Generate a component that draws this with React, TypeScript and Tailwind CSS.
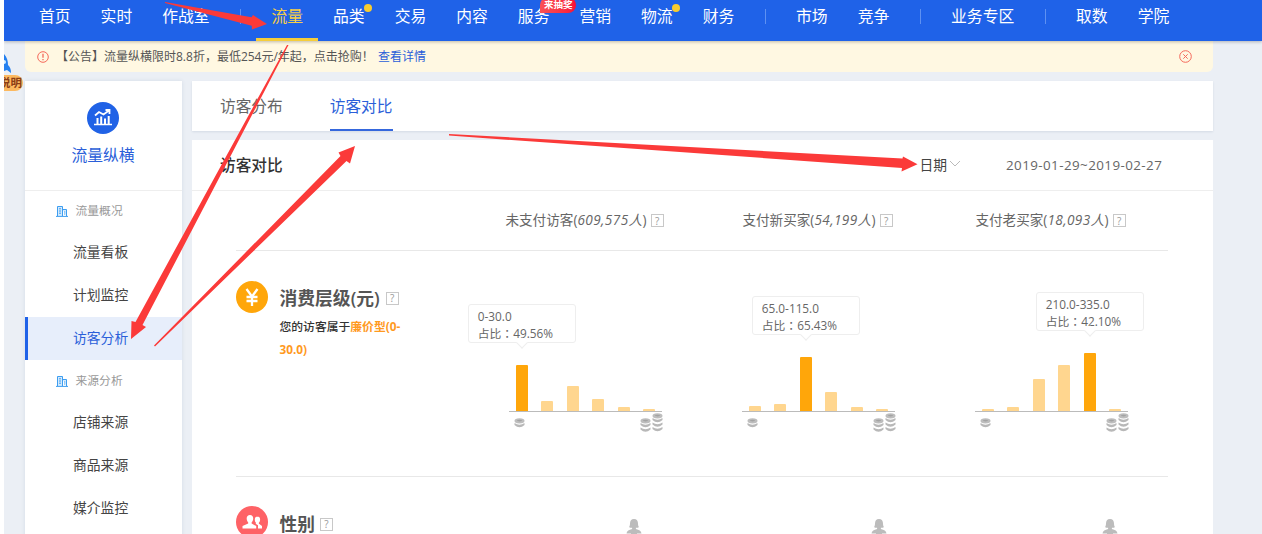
import clsx from 'clsx'

const navGroups = [
  [{ name: '首页' }, { name: '实时' }, { name: '作战室' }],
  [
    { name: '流量', active: true },
    { name: '品类', dot: true },
    { name: '交易' },
    { name: '内容' },
    { name: '服务', badge: '来抽奖' },
    { name: '营销' },
    { name: '物流', dot: true },
    { name: '财务' },
  ],
  [{ name: '市场' }, { name: '竞争' }],
  [{ name: '业务专区' }],
  [{ name: '取数' }, { name: '学院' }],
] as { name: string; active?: boolean; dot?: boolean; badge?: string }[][]

const menu = [
  { title: '流量概况', items: ['流量看板', '计划监控', '访客分析'] },
  { title: '来源分析', items: ['店铺来源', '商品来源', '媒介监控'] },
]

const columns = [
  { name: '未支付访客', count: '609,575', range: '0-30.0', rate: '49.56%', top: 0, bars: [46, 10, 25, 12, 4, 2] },
  { name: '支付新买家', count: '54,199', range: '65.0-115.0', rate: '65.43%', top: 2, bars: [5, 7, 54, 19, 4, 2] },
  { name: '支付老买家', count: '18,093', range: '210.0-335.0', rate: '42.10%', top: 4, bars: [2, 4, 32, 46, 58, 2] },
]

function Help() {
  return (
    <span className="inline-flex h-[13px] w-[13px] shrink-0 items-center justify-center border border-[#c8c8c8] text-[10px] leading-none font-normal text-[#999]">
      ?
    </span>
  )
}

function Building() {
  return (
    <svg className="h-3 w-3" viewBox="0 0 12 12" fill="#d3eafd" stroke="#3d9df0" strokeWidth="1">
      <path d="M1.5 11V1.5h5V11M6.5 4.5h4V11M0 11.4h12" />
      <path d="M3 3.8h2M3 6h2M3 8.2h2M8 7h1.2M8 9h1.2" />
    </svg>
  )
}

function Coins({ n }: { n: number }) {
  return (
    <svg width="11" height={5 + n * 4.5} viewBox={`0 0 11 ${5 + n * 4.5}`}>
      <ellipse cx="5.5" cy="2.8" rx="5" ry="2.6" fill="#bdbdbd" />
      <ellipse cx="5.5" cy="2.6" rx="2.6" ry="0.8" fill="#a3a3a3" />
      {Array.from({ length: n }, (_, i) => (
        <path key={i} d={`M0.5 ${5 + i * 4.5}q5 3.4 10 0v2q-5 4.4-10 0z`} fill="#b8b8b8" />
      ))}
    </svg>
  )
}

function Chart({ col }: { col: (typeof columns)[number] }) {
  return (
    <div className="flex flex-col items-center pt-[90px]">
      {/* bars sit on the axis */}
      <div className="flex h-[71px] w-[153px] items-end border-b border-[#bbb]">
        {col.bars.map((h, i) => (
          <div key={i} className="relative flex w-[25.5px] justify-center">
            <div
              className={clsx('w-3 rounded-t-[1px]', i === col.top ? 'bg-[#ffa60a]' : 'bg-[#ffd68f]')}
              style={{ height: h }}
            />
            {i === col.top && (
              <div className="absolute bottom-full left-1/2 mb-[22px] h-[39px] w-[108px] -translate-x-1/2 rounded-[3px] border border-[#eee] bg-white pt-[3px] pl-[9px] text-[11.8px] leading-[16.5px] whitespace-nowrap text-[#666]">
                <p>{col.range}</p>
                <p>
                  占比<span className="font-['Noto_Sans_CJK_TC',sans-serif]">：</span>
                  {col.rate}
                </p>
                <span className="absolute -bottom-[5px] left-[49px] h-2 w-2 rotate-45 border-r border-b border-[#eee] bg-white" />
              </div>
            )}
          </div>
        ))}
      </div>
      <div className="mt-px flex w-[155px] items-start justify-between pl-1.5">
        <div className="pt-[5px]">
          <Coins n={1} />
        </div>
        <div className="flex items-end gap-px">
          <Coins n={2} />
          <Coins n={3} />
        </div>
      </div>
    </div>
  )
}

function Person() {
  return (
    <svg width="16" height="18" viewBox="0 0 16 18" fill="#bcbcbc">
      <path d="M8 0C5.2 0 4 2 4 4.4c0 1.6-.3 2.7-1 3.6.9.8 2 .9 3.1.8v1.3C3 11 .8 11.8.5 14.5h15c-.3-2.7-2.5-3.5-5.6-4.4V8.8c1.1.1 2.2 0 3.1-.8-.7-.9-1-2-1-3.6C12 2 10.8 0 8 0z" />
      <path d="M5 14h6v4H5z" />
    </svg>
  )
}

function Arrows() {
  return (
    <svg className="pointer-events-none absolute inset-0 z-20" width="1262" height="534" fill="#fb3a39">
      <path d="M165 2L251.5 17.3L253 15L267 24L252 29.5L251.7 25.8L165 3z" />
      <path d="M287 45L288.5 45L142.5 325L146 327L131 339L131.5 321L135.5 322z" />
      <path d="M154 345.5L340.5 156L338.5 152.5L355 146L350 163.5L346.5 161L155 346.5z" />
      <path d="M449 134L902.5 158.5L903 156.5L917.5 164.3L901.5 171.5L902 168L449 135.5z" />
    </svg>
  )
}

export default function App() {
  return (
    <div className="relative h-[534px] w-[1262px] overflow-hidden border-l-4 border-white bg-[#ebeff5] font-['Open_Sans','Noto_Sans_CJK_SC',sans-serif] text-[#333]">
      <nav className="relative z-10 flex h-[41px] bg-[#1f62e8] pl-5 text-[15.8px] text-white shadow-[0_1px_3px_rgba(0,0,0,0.25)]">
        {navGroups.map((group, g) => (
          <div key={g} className="flex">
            {g > 0 && <span className="mx-[15.4px] mt-[9px] h-[15px] w-px bg-[#5e91f2]" />}
            {group.map((item) => (
              <a
                key={item.name}
                className={clsx(
                  'relative h-[41px] border-b-3 px-[15px] leading-[33px] whitespace-nowrap',
                  item.active ? 'border-[#f5cd3a] text-[#f7cf45]' : 'border-transparent',
                )}
              >
                {item.name}
                {item.dot && <i className="absolute top-1 right-2 h-2 w-2 rounded-full bg-[#f8cc30]" />}
                {item.badge && (
                  <i className="absolute -top-[3px] -right-[12px] h-[16px] rounded-full rounded-bl-none bg-linear-to-r from-[#fa5055] to-[#f80a38] px-1 pt-[2px] text-[9.5px] leading-[12px] font-bold not-italic">
                    {item.badge}
                  </i>
                )}
              </a>
            ))}
          </div>
        ))}
      </nav>

      <div className="ml-[21px] flex h-[31px] w-[1188px] items-center rounded-b-md bg-[#fff8e2] pr-[21px] pl-3 text-[12px] text-[#555]">
        <svg className="h-3 w-3" viewBox="0 0 12 12" fill="none" stroke="#f5695b">
          <circle cx="6" cy="6" r="5.3" />
          <path d="M6 2.8v4M6 8v1.2" strokeWidth="1.3" />
        </svg>
        <span className="ml-[7px]">【公告】流量纵横限时8.8折，最低254元/年起，点击抢购！</span>
        <a className="ml-1 text-[#2b5fd9]">查看详情</a>
        <svg className="ml-auto h-[13px] w-[13px]" viewBox="0 0 13 13" fill="none" stroke="#f5695b">
          <circle cx="6.5" cy="6.5" r="5.8" />
          <path d="M4.3 4.3l4.4 4.4M8.7 4.3l-4.4 4.4" />
        </svg>
      </div>

      {/* floating helper */}
      <div className="absolute top-[54px] left-0 z-10 w-[19px] overflow-hidden">
        <svg width="8" height="21" viewBox="0 0 8 21">
          <path d="M0 0c3 3 4 7 4 11 2 2 3 4 3 8L3 16l-3 1z" fill="#2480f0" />
          <circle cx="0" cy="8" r="2" fill="#d9efff" />
        </svg>
        <div className="flex h-4 w-[19px] justify-end rounded-r-full bg-[#fcb960] pr-px text-[11.5px] leading-4 font-bold whitespace-nowrap text-[#8b3d16]">
          说明
        </div>
      </div>

      <div className="mt-[9px] ml-[21px] flex gap-2.5">
        <aside className="h-[460px] w-[157px] bg-white shadow-[0_0_4px_rgba(60,80,120,0.12)]">
          <div className="flex h-[110px] flex-col items-center border-b border-[#eee] pt-[21px] pr-px">
            <svg width="32" height="32" viewBox="0 0 32 32">
              <circle cx="16" cy="16" r="16" fill="#2062e6" />
              <g fill="none" stroke="#fff" strokeWidth="2">
                <path d="M8 13.5l4-3.5 4.5 2.5 5.5-4M18.5 8h4v4" strokeWidth="1.8" />
                <path d="M10.5 16v6M14.2 14.5V22M18 16.5V22M21.7 14V22" />
                <path d="M7 22.5h18" strokeWidth="1.5" />
              </g>
            </svg>
            <p className="mt-[9px] text-[15.8px] leading-6 text-[#2b5fd9]">流量纵横</p>
          </div>
          <div className="-mt-px">
            {menu.map((m) => (
              <div key={m.title} className="text-[13.8px]">
                <div className="flex h-[41px] items-center gap-2 pl-[30.5px] text-[11.8px] text-[#999]">
                  <Building />
                  {m.title}
                </div>
                {m.items.map((item) => (
                  <div
                    key={item}
                    className={clsx(
                      'flex h-[43px] items-center border-l-3 pl-[45px]',
                      item === '访客分析' ? 'border-[#1f62e8] bg-[#e7eefb] text-[#2b5fd9]' : 'border-transparent text-[#444]',
                    )}
                  >
                    {item}
                  </div>
                ))}
              </div>
            ))}
          </div>
        </aside>

        <main className="w-[1021px]">
          <div className="flex h-[50px] gap-[47px] bg-white pl-7 text-[15.7px] leading-[51px] text-[#666] shadow-[0_1px_2px_rgba(60,80,120,0.12)]">
            <a>访客分布</a>
            <a className="border-b-2 border-[#3567dd] text-[#2b5fd9]">访客对比</a>
          </div>

          <section className="mt-[9px] h-[400px] bg-white">
            <header className="flex h-[51px] items-center border-b border-[#eee] pr-[51px] pl-7 text-[13.8px]">
              <h2 className="pt-px text-[15.7px] font-medium">访客对比</h2>
              <span className="ml-auto text-[#444]">日期</span>
              <svg className="mb-1 ml-0.5 h-2.5 w-3" viewBox="0 0 12 10" fill="none" stroke="#bbb">
                <path d="M1 3l5 5 5-5" />
              </svg>
              <span className="ml-[45px] w-[156px] text-[13.4px] tracking-[0.42px] whitespace-nowrap text-[#666]">
                2019-01-29~2019-02-27
              </span>
            </header>

            <div className="mr-[45px] ml-11">
              <div className="grid h-[60px] grid-cols-4 border-b border-[#e8e8e8] text-[13.6px] text-[#666]">
                <span />
                {columns.map((c) => (
                  <div key={c.name} className="-ml-0.5 flex items-center justify-center gap-1 whitespace-nowrap">
                    <span>
                      {c.name}(<i className="tracking-[0.4px]">{c.count}人</i>)
                    </span>
                    <Help />
                  </div>
                ))}
              </div>

              <div className="grid h-[226px] grid-cols-4 border-b border-[#e8e8e8]">
                <div className="flex gap-[11.5px] pt-[30px]">
                  <svg className="h-8 w-8 shrink-0" viewBox="0 0 32 32">
                    <circle cx="16" cy="16" r="16" fill="#ffa60a" />
                    <path d="M10.5 8L16 15.5 21.5 8M16 15.5V25M10.5 16h11M10.5 20h11" fill="none" stroke="#fff" strokeWidth="2.3" />
                  </svg>
                  <div className="w-[128px]">
                    <h3 className="flex items-center gap-1.5 pt-[3px] text-[17.8px] leading-7 font-semibold whitespace-nowrap text-[#555]">
                      消费层级(元) <Help />
                    </h3>
                    <p className="mt-[3px] text-[11.8px] leading-[23px] font-medium">
                      您的访客属于<b className="text-[#ff9a1f]">廉价型(0-<br />30.0)</b>
                    </p>
                  </div>
                </div>
                {columns.map((c) => (
                  <Chart key={c.name} col={c} />
                ))}
              </div>

              <div className="grid grid-cols-4">
                <div className="flex gap-[11.5px] pt-[29px]">
                  <svg className="h-8 w-8 shrink-0" viewBox="0 0 32 32">
                    <circle cx="16" cy="16" r="16" fill="#fe6266" />
                    <path d="M14 9c-2.2 0-3.5 1.6-3.3 3.8.1 1.6.7 2.8 1.5 3.6v1.2L6.5 20v2.5h13.7V20l-4.6-2.4v-1.2c.9-.8 1.5-2 1.6-3.6.2-2.2-1-3.8-3.2-3.8zM21.5 10.5c-1.8 0-2.8 1.4-2.7 3.2.1 1.5.5 2.5 1.3 3.2l-.5.8 2.4 1.6v3.2h4V20l-3-2.3-.3-.8c.8-.7 1.3-1.7 1.4-3.2.1-1.8-.9-3.2-2.6-3.2z" fill="#fff" />
                  </svg>
                  <h3 className="flex h-7 items-center gap-[5px] pt-2 text-[17.7px] leading-[18px] font-semibold text-[#555]">
                    性别 <Help />
                  </h3>
                </div>
                <div className="pt-[42px] pl-[157px]"><Person /></div>
                <div className="pt-[42px] pl-[169px]"><Person /></div>
                <div className="pt-[42px] pl-[167px]"><Person /></div>
              </div>
            </div>
          </section>
        </main>
      </div>

      <div className="absolute inset-y-0 -left-1 z-20">
        <Arrows />
      </div>
    </div>
  )
}
